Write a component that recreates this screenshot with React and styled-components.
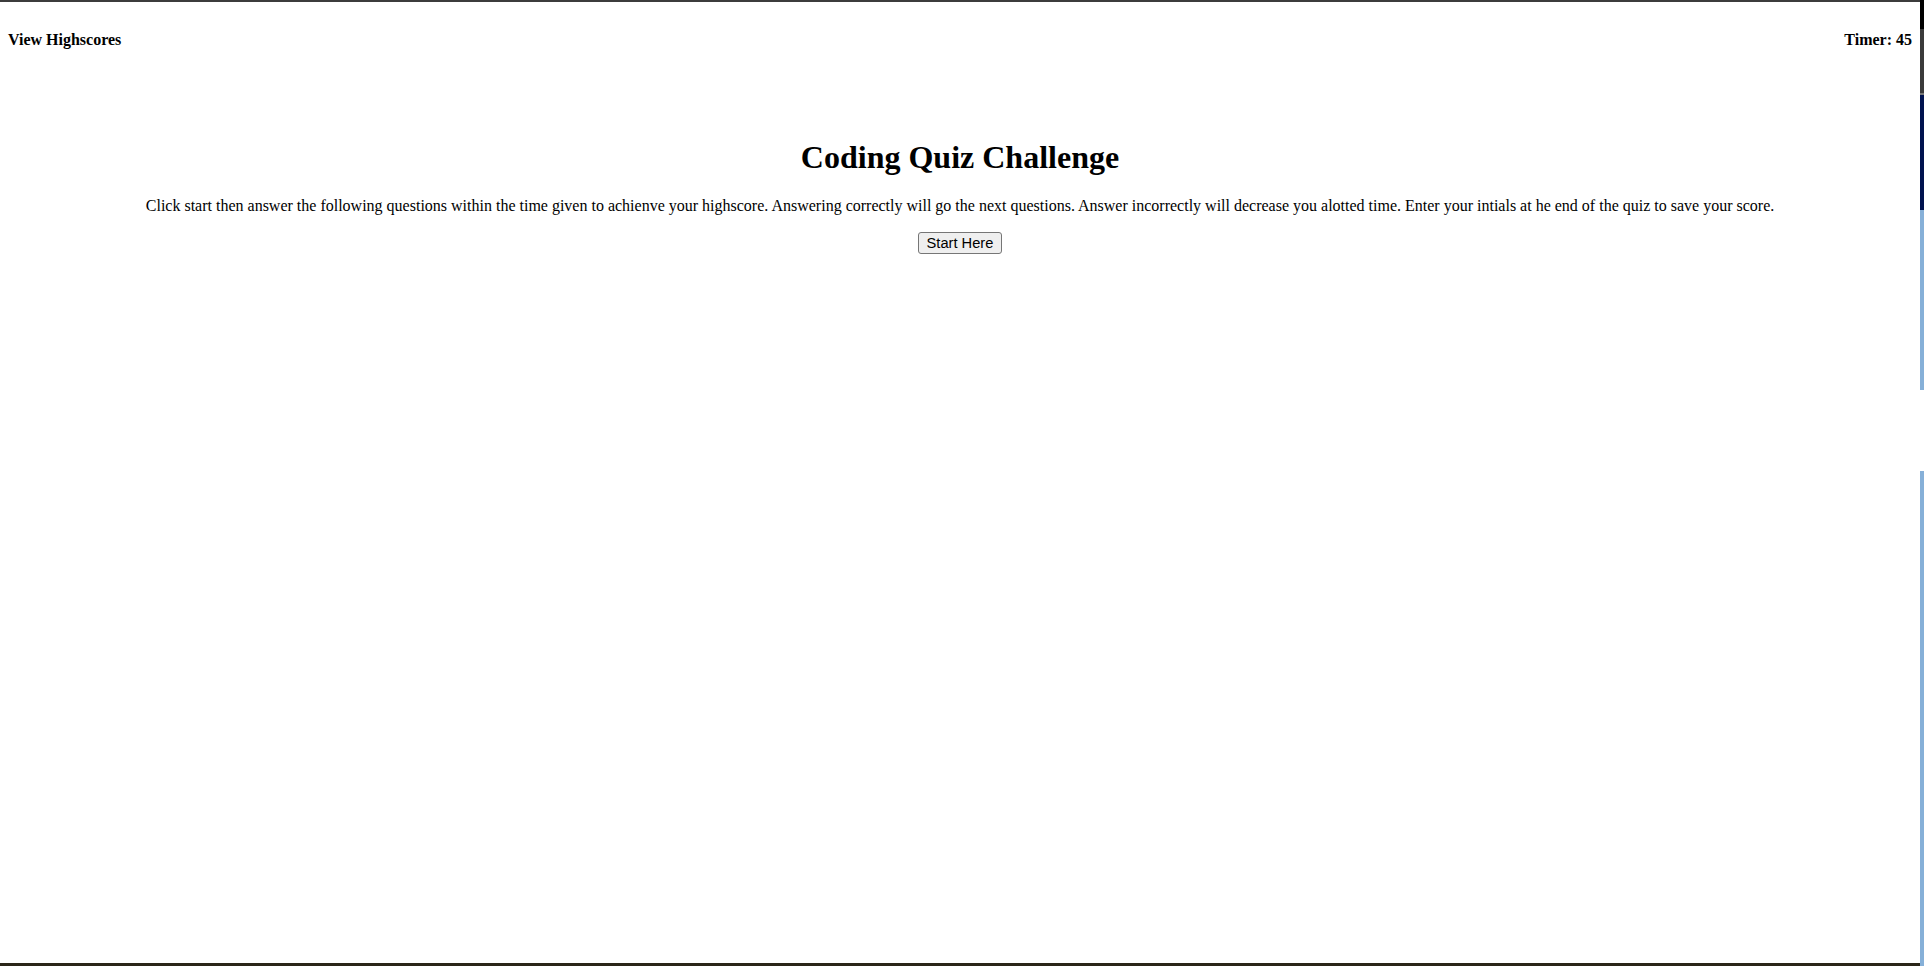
import React, { useState } from 'react';
import styled, { createGlobalStyle } from 'styled-components';

const GlobalStyle = createGlobalStyle`
  html, body {
    margin: 0;
    padding: 0;
    background: #ffffff;
  }

  body {
    font-family: "Liberation Serif", "Times New Roman", serif;
    color: #000000;
  }
`;

// strip of the desktop that shows past the right edge of the window
const edgeSegments = [
  { height: 29, color: '#000000' },
  { height: 64, color: '#3a3a3a' },
  { height: 2, color: '#777777' },
  { height: 115, color: '#00124f' },
  { height: 180, color: '#86b0d8' },
  { height: 81, color: '#ffffff' },
  { height: 495, color: '#86b0d8' },
];

const Screen = styled.div`
  display: flex;
  width: 1924px;
  height: 966px;
  overflow: hidden;
`;

const Page = styled.div`
  width: 1920px;
  height: 966px;
  box-sizing: border-box;
  border-top: 2px solid #3c3c3c;
  border-bottom: 3px solid #2a2618;
  padding: 0 8px;
  background: #ffffff;
`;

const Edge = styled.div`
  display: flex;
  flex-direction: column;
  width: 4px;
`;

const Segment = styled.div`
  flex: none;
  height: ${(p) => p.$h}px;
  background: ${(p) => p.$color};
`;

const Header = styled.header`
  display: flex;
  justify-content: space-between;
  align-items: flex-start;
  padding-top: 29px;
`;

const HeaderItem = styled.span`
  font-size: 16px;
  font-weight: bold;
  line-height: normal;
  cursor: ${(p) => (p.$link ? 'pointer' : 'default')};
`;

const Main = styled.main`
  text-align: center;
`;

const Title = styled.h1`
  font-size: 32px;
  font-weight: bold;
  margin: 90px 0 21px;
  line-height: normal;
`;

const Intro = styled.p`
  font-size: 16px;
  margin: 0;
  line-height: normal;
`;

const ButtonRow = styled.div`
  display: flex;
  justify-content: center;
  padding-top: 17px;
`;

const StartButton = styled.button`
  font-family: "Liberation Sans", Arial, sans-serif;
  font-size: 14.67px;
  line-height: 18px;
  padding: 1px 8px;
  color: #000000;
  background: #efefef;
  border: 1px solid #767676;
  border-radius: 3px;
  cursor: pointer;

  &:hover {
    background: #e5e5e5;
  }
`;

const App = () => {
  const [timer] = useState(45);

  return (
    <>
      <GlobalStyle />
      <Screen>
        <Page>
          <Header>
            <HeaderItem $link>View Highscores</HeaderItem>
            <HeaderItem>Timer: {timer}</HeaderItem>
          </Header>

          <Main>
            <Title>Coding Quiz Challenge</Title>
            <Intro>
              Click start then answer the following questions within the time given to achienve your
              highscore. Answering correctly will go the next questions. Answer incorrectly will
              decrease you alotted time. Enter your intials at he end of the quiz to save your score.
            </Intro>
            <ButtonRow>
              <StartButton type="button">Start Here</StartButton>
            </ButtonRow>
          </Main>
        </Page>

        <Edge>
          {edgeSegments.map((s, i) => (
            <Segment key={i} $h={s.height} $color={s.color} />
          ))}
        </Edge>
      </Screen>
    </>
  );
};

export default App;
